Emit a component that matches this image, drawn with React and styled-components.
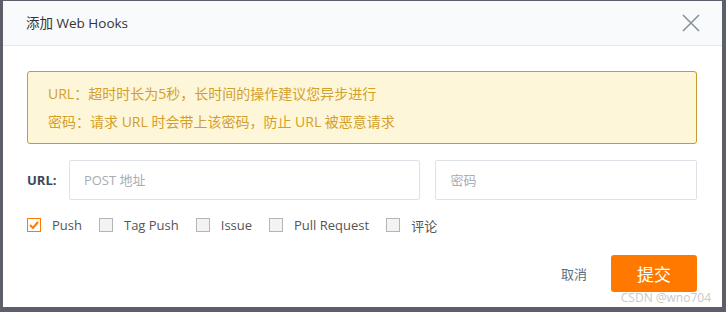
import React, { useState } from "react";
import styled, { createGlobalStyle } from "styled-components";

const GlobalStyle = createGlobalStyle`
  html, body {
    margin: 0;
    padding: 0;
    background: #5c5f69;
  }
  body {
    font-family: "Open Sans", "Noto Sans CJK SC", sans-serif;
  }
  * { box-sizing: border-box; }
`;

const Dialog = styled.div`
  position: relative;
  margin: 1px 4px 0 3px;
  width: 719px;
  height: 306px;
  background: #fff;
  display: flex;
  flex-direction: column;
`;

const Header = styled.div`
  height: 45px;
  background: #f9fafb;
  border-bottom: 1px solid #e6e8eb;
  display: flex;
  align-items: center;
  justify-content: space-between;
  padding: 0 22px 0 23px;
`;

const Title = styled.h3`
  margin: 0;
  font-size: 13.5px;
  font-weight: 400;
  color: #333;
  padding-bottom: 2px;
`;

const Close = styled.button`
  border: 0;
  background: none;
  padding: 0;
  width: 18px;
  height: 18px;
  cursor: pointer;
  display: flex;
`;

const Body = styled.div`
  padding: 25px 25px 0 24px;
  display: flex;
  flex-direction: column;
`;

const Alert = styled.div`
  height: 73px;
  background: #fef6d8;
  border: 1px solid #c99a2e;
  border-radius: 3px;
  padding: 8px 20px;
  color: #d39f2c;
  font-size: 14px;
  line-height: 28px;
`;

const Row = styled.div`
  display: flex;
  align-items: center;
  margin-top: 16px;
`;

const Label = styled.label`
  width: 42px;
  font-size: 13px;
  font-weight: 700;
  color: #3b4758;
`;

const Input = styled.input`
  height: 40px;
  width: ${(p) => p.$w}px;
  margin-left: ${(p) => p.$ml || 0}px;
  border: 1px solid #dde2e8;
  border-radius: 2px;
  padding: 0 14px;
  font-family: inherit;
  font-size: 13px;
  color: #333;
  outline: none;
  &::placeholder { color: #a8adb3; }
`;

const Checks = styled.div`
  display: flex;
  align-items: center;
  margin-top: 18px;
  height: 14px;
`;

const CheckItem = styled.label`
  display: flex;
  align-items: center;
  margin-right: 17px;
  font-size: 13px;
  color: #555;
  cursor: pointer;
`;

const Box = styled.span`
  width: 14px;
  height: 14px;
  margin-right: 11px;
  border: 1px solid ${(p) => (p.$on ? "#ff7a00" : "#b5b5b5")};
  background: ${(p) => (p.$on ? "#fff" : "#f3f3f3")};
  display: flex;
  align-items: center;
  justify-content: center;
`;

const Footer = styled.div`
  display: flex;
  justify-content: flex-end;
  align-items: center;
  margin-top: 23px;
`;

const Cancel = styled.button`
  border: 0;
  background: none;
  font-family: inherit;
  font-size: 13px;
  color: #5e6d82;
  margin-right: 24px;
  padding: 0;
  cursor: pointer;
`;

const Submit = styled.button`
  width: 86px;
  height: 37px;
  border: 0;
  border-radius: 3px;
  background: #ff7800;
  color: #fff;
  font-family: inherit;
  font-size: 17px;
  cursor: pointer;
`;

const Mark = styled.span`
  position: absolute;
  right: 11px;
  bottom: 1px;
  font-size: 12px;
  color: #c9c9c9;
`;

const items = ["Push", "Tag Push", "Issue", "Pull Request", "评论"];

export default function App() {
  const [checked, setChecked] = useState({ Push: true });

  return (
    <>
      <GlobalStyle />
      <Dialog>
        <Header>
          <Title>添加 Web Hooks</Title>
          <Close aria-label="close">
            <svg width="18" height="18" viewBox="0 0 18 18">
              <path d="M1 1L17 17M17 1L1 17" stroke="#87929b" strokeWidth="1.6" fill="none" />
            </svg>
          </Close>
        </Header>
        <Body>
          <Alert>
            <div>URL：超时时长为5秒，长时间的操作建议您异步进行</div>
            <div>密码：请求 URL 时会带上该密码，防止 URL 被恶意请求</div>
          </Alert>
          <Row>
            <Label>URL:</Label>
            <Input $w={352} placeholder="POST 地址" />
            <Input $w={262} $ml={15} placeholder="密码" />
          </Row>
          <Checks>
            {items.map((name) => (
              <CheckItem
                key={name}
                onClick={() => setChecked((c) => ({ ...c, [name]: !c[name] }))}
              >
                <Box $on={checked[name]}>
                  {checked[name] && (
                    <svg width="10" height="8" viewBox="0 0 10 8">
                      <path d="M1 4L4 7L9 1" stroke="#ff7a00" strokeWidth="2" fill="none" />
                    </svg>
                  )}
                </Box>
                {name}
              </CheckItem>
            ))}
          </Checks>
          <Footer>
            <Cancel>取消</Cancel>
            <Submit>提交</Submit>
          </Footer>
        </Body>
        <Mark>CSDN @wno704</Mark>
      </Dialog>
    </>
  );
}
